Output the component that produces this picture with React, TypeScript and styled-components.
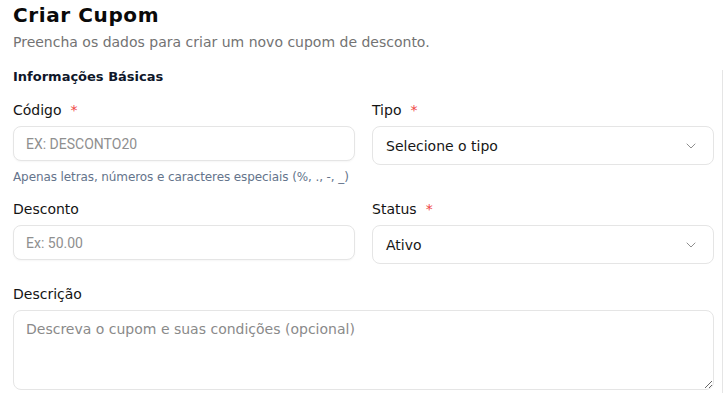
import React from 'react'
import styled, { createGlobalStyle } from 'styled-components'
import { ChevronDown } from 'lucide-react'

const GlobalStyle = createGlobalStyle`
  html, body {
    margin: 0;
    padding: 0;
    background: #ffffff;
  }
  body {
    font-family: 'DejaVu Sans', 'Open Sans', sans-serif;
    color: #171717;
  }
  * {
    box-sizing: border-box;
  }
`

const Page = styled.div`
  display: flex;
  flex-direction: column;
  height: 393px;
  overflow: hidden;
`

const Header = styled.header`
  display: flex;
  flex-direction: column;
  gap: 3px;
  padding: 1px 13px 0;
`

const Title = styled.h2`
  margin: 0;
  font-size: 20px;
  line-height: 28px;
  font-weight: 700;
  letter-spacing: 0.6px;
  color: #0a0a0a;
`

const Subtitle = styled.p`
  margin: 0;
  font-size: 14px;
  line-height: 20px;
  color: #737373;
`

const Body = styled.div`
  flex: 1;
  margin-top: 18px;
  margin-right: 1px;
  padding: 0 8px 0 13px;
  border-right: 1px solid #e5e5e5;
`

const SectionTitle = styled.h3`
  margin: 0 0 16px;
  font-size: 13px;
  line-height: 14px;
  font-weight: 700;
  color: #0f172a;
`

const Grid = styled.div`
  display: grid;
  grid-template-columns: 1fr 1fr;
  column-gap: 17px;
  row-gap: 14px;
`

const Field = styled.div<{ $wide?: boolean }>`
  display: flex;
  flex-direction: column;
  gap: 6px;
  grid-column: ${(p) => (p.$wide ? '1 / -1' : 'auto')};
  margin-top: ${(p) => (p.$wide ? '6px' : '0')};
`

const Label = styled.label`
  display: flex;
  gap: 9px;
  font-size: 14px;
  line-height: 20px;
  color: #141414;
`

const Required = styled.span`
  color: #ef4444;
`

const TextInput = styled.input`
  height: 35px;
  width: 100%;
  padding: 0 12px;
  border: 1px solid #e5e5e5;
  border-radius: 8px;
  background: #fff;
  font-family: Roboto, 'Liberation Sans', sans-serif;
  font-size: 14px;
  color: #171717;
  box-shadow: 0 1px 2px rgba(0, 0, 0, 0.04);
  outline: none;

  &::placeholder {
    color: #8f8f8f;
  }
`

const Hint = styled.p`
  margin: 2px 0 0;
  font-size: 12px;
  line-height: 16px;
  letter-spacing: -0.1px;
  color: #64748b;
`

const SelectBox = styled.button`
  display: flex;
  align-items: center;
  justify-content: space-between;
  height: 39px;
  width: 100%;
  padding: 0 14px 0 13px;
  border: 1px solid #e5e5e5;
  border-radius: 8px;
  background: #fff;
  font-family: inherit;
  font-size: 14px;
  color: #171717;
  cursor: pointer;

  svg {
    color: #737373;
    opacity: 0.8;
  }
`

const TextArea = styled.textarea`
  height: 80px;
  width: 100%;
  padding: 8px 12px;
  border: 1px solid #e5e5e5;
  border-radius: 8px;
  font-family: inherit;
  font-size: 14px;
  line-height: 20px;
  color: #171717;
  outline: none;

  &::placeholder {
    color: #8a8a8a;
  }
`

const Select = ({ value }: { value: string }) => (
  <SelectBox type="button">
    <span>{value}</span>
    <ChevronDown size={16} strokeWidth={1.5} />
  </SelectBox>
)

export default function App() {
  return (
    <Page>
      <GlobalStyle />
      <Header>
        <Title>Criar Cupom</Title>
        <Subtitle>Preencha os dados para criar um novo cupom de desconto.</Subtitle>
      </Header>
      <Body>
        <SectionTitle>Informações Básicas</SectionTitle>
        <Grid>
          <Field>
            <Label>
              Código <Required>*</Required>
            </Label>
            <TextInput placeholder="EX: DESCONTO20" />
            <Hint>Apenas letras, números e caracteres especiais (%, ., -, _)</Hint>
          </Field>
          <Field>
            <Label>
              Tipo <Required>*</Required>
            </Label>
            <Select value="Selecione o tipo" />
          </Field>
          <Field>
            <Label>Desconto</Label>
            <TextInput placeholder="Ex: 50.00" />
          </Field>
          <Field>
            <Label>
              Status <Required>*</Required>
            </Label>
            <Select value="Ativo" />
          </Field>
          <Field $wide>
            <Label>Descrição</Label>
            <TextArea placeholder="Descreva o cupom e suas condições (opcional)" />
          </Field>
        </Grid>
      </Body>
    </Page>
  )
}
